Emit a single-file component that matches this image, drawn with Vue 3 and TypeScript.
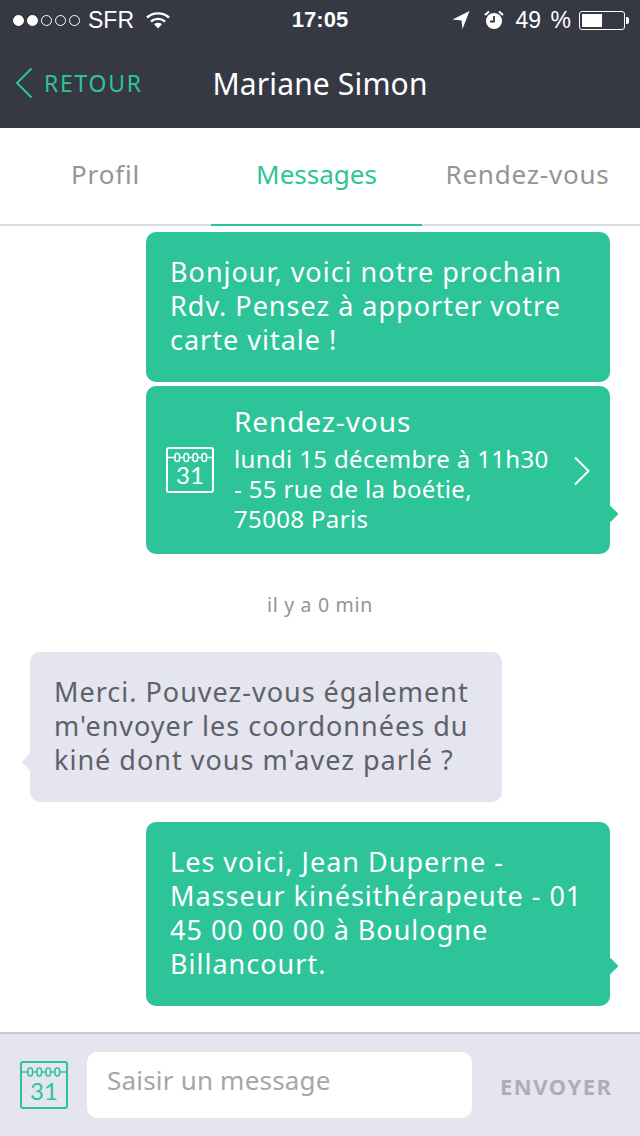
<template>
  <div class="screen">
    <header class="top">
      <div class="status">
        <div class="status-left">
          <span class="signal">
            <i v-for="n in 5" :key="n" class="dot" :class="{ on: n <= 2 }"></i>
          </span>
          <span class="carrier">SFR</span>
          <svg class="wifi" width="24" height="18" viewBox="0 0 24 18">
            <path d="M1 6.500C7 1 17 1 23 6.500" fill="none" stroke="#fff" stroke-width="2.400" />
            <path d="M5 10.500C9 7 15 7 19 10.500" fill="none" stroke="#fff" stroke-width="2.400" />
            <path d="M8 13C10.500 11.200 13.500 11.200 16 13L12 17.500Z" fill="#fff" />
          </svg>
        </div>
        <span class="time">17:05</span>
        <div class="status-right">
          <svg width="18" height="20" viewBox="0 0 18 20">
            <path d="M0.500 9.500L17.500 1L10.500 19L9.500 10.500Z" fill="#fff" />
          </svg>
          <svg class="alarm" width="20" height="20" viewBox="0 0 20 20">
            <circle cx="10" cy="11" r="8" fill="#fff" />
            <path d="M10 6V11.500H6" fill="none" stroke="#363844" stroke-width="1.800" />
            <path d="M1 5L5 1.500M19 5L15 1.500" stroke="#fff" stroke-width="2" />
          </svg>
          <span class="percent">49 %</span>
          <span class="battery"><span class="level"></span></span>
          <span class="nub"></span>
        </div>
      </div>
      <nav class="nav">
        <div class="back">
          <svg width="18" height="32" viewBox="0 0 18 32">
            <path d="M16.500 1.500L2 16L16.500 30.500" fill="none" stroke="#2dc499" stroke-width="2" />
          </svg>
          <span>RETOUR</span>
        </div>
        <h1 class="name">Mariane Simon</h1>
      </nav>
    </header>

    <div class="tabs">
      <div v-for="tab in tabs" :key="tab" class="tab" :class="{ active: tab === 'Messages' }">{{ tab }}</div>
    </div>

    <main class="thread">
      <div class="bubble mine first">Bonjour, voici notre prochain Rdv. Pensez à apporter votre carte vitale !</div>

      <div class="bubble mine rdv tail">
        <svg class="cal" width="48" height="46" viewBox="0 0 48 46">
          <path d="M1 10V3Q1 1 3 1H45Q47 1 47 3V10M1 10V43Q1 45 3 45H45Q47 45 47 43V10" fill="none" stroke="#fff" stroke-width="2" />
          <path d="M1 10.500H47" stroke="#fff" stroke-width="1.600" />
          <g fill="#2dc499" stroke="#fff" stroke-width="1.500">
            <rect x="9" y="6.500" width="4.500" height="8" rx="2.200" />
            <rect x="18" y="6.500" width="4.500" height="8" rx="2.200" />
            <rect x="27" y="6.500" width="4.500" height="8" rx="2.200" />
            <rect x="36" y="6.500" width="4.500" height="8" rx="2.200" />
          </g>
          <text x="24" y="37" text-anchor="middle" class="cal-num" fill="#fff">31</text>
        </svg>
        <div class="rdv-text">
          <div class="rdv-title">Rendez-vous</div>
          <div class="rdv-body">lundi 15 décembre à 11h30<br />- 55 rue de la boétie,<br />75008 Paris</div>
        </div>
        <svg class="chev" width="18" height="30" viewBox="0 0 18 30">
          <path d="M2 1.500L15.500 15L2 28.500" fill="none" stroke="#fff" stroke-width="2" />
        </svg>
      </div>

      <div class="stamp">il y a 0 min</div>

      <div class="bubble theirs">Merci. Pouvez-vous également m'envoyer les coordonnées du kiné dont vous m'avez parlé ?</div>

      <div class="bubble mine last tail">Les voici, Jean Duperne - Masseur kinésithérapeute - 01 45 00 00 00 à Boulogne Billancourt.</div>
    </main>

    <footer class="composer">
      <svg class="cal" width="48" height="48" viewBox="0 0 48 48">
        <path d="M1 11V3Q1 1 3 1H45Q47 1 47 3V11M1 11V45Q1 47 3 47H45Q47 47 47 45V11" fill="none" stroke="#2dc499" stroke-width="2" />
        <path d="M1 11H47" stroke="#2dc499" stroke-width="1.600" />
        <g fill="#e4e5ee" stroke="#2dc499" stroke-width="1.500">
          <rect x="8" y="7" width="4.500" height="8" rx="2.200" />
          <rect x="17" y="7" width="4.500" height="8" rx="2.200" />
          <rect x="26" y="7" width="4.500" height="8" rx="2.200" />
          <rect x="35" y="7" width="4.500" height="8" rx="2.200" />
        </g>
        <text x="24" y="39" text-anchor="middle" class="cal-num" fill="#2dc499">31</text>
      </svg>
      <div class="input">Saisir un message</div>
      <span class="send">ENVOYER</span>
    </footer>
  </div>
</template>

<script setup lang="ts">
const tabs: string[] = ['Profil', 'Messages', 'Rendez-vous']
</script>

<style>
body {
  background: #fff;
}
</style>

<style scoped>
.screen {
  width: 640px;
  height: 1136px;
  display: flex;
  flex-direction: column;
  overflow: hidden;
  font-family: "Noto Sans", Lato, sans-serif;
  background: #fff;
}

.top {
  height: 128px;
  background: #363844;
  color: #fff;
}

.status {
  height: 40px;
  display: grid;
  grid-template-columns: 1fr auto 1fr;
  align-items: center;
  font-family: "Liberation Sans", Arial, sans-serif;
  font-size: 23px;
}

.status-left {
  display: flex;
  align-items: center;
  padding-left: 13px;
}

.signal {
  display: flex;
  gap: 3px;
}

.dot {
  width: 11px;
  height: 11px;
  box-sizing: border-box;
  border: 1px solid #fff;
  border-radius: 50%;
}

.dot.on {
  background: #fff;
}

.carrier {
  margin-left: 8px;
}

.wifi {
  margin-left: 12px;
}

.time {
  font-weight: 700;
  font-size: 22px;
}

.status-right {
  display: flex;
  align-items: center;
  justify-content: flex-end;
  padding-right: 11px;
}

.alarm {
  margin-left: 14px;
}

.percent {
  margin-left: 12px;
  word-spacing: 3px;
}

.battery {
  width: 46px;
  height: 19px;
  margin-left: 8px;
  padding: 2px;
  box-sizing: border-box;
  border: 1px solid #fff;
  border-radius: 3px;
}

.level {
  display: block;
  width: 20px;
  height: 100%;
  background: #fff;
}

.nub {
  width: 3px;
  height: 7px;
  margin-left: 1px;
  background: #fff;
  border-radius: 0 2px 2px 0;
}

.nav {
  height: 88px;
  position: relative;
  display: flex;
  align-items: center;
  justify-content: center;
}

.back {
  position: absolute;
  left: 15px;
  top: 27px;
  display: flex;
  align-items: center;
  gap: 11px;
  color: #2dc499;
  font-size: 23px;
  letter-spacing: 1.700px;
}

.name {
  margin: 0 0 2px;
  font-size: 30px;
  font-weight: 400;
  letter-spacing: 0.150px;
  color: #fff;
}

.tabs {
  height: 98px;
  box-sizing: border-box;
  display: grid;
  grid-template-columns: 211px 211px 211px;
  border-bottom: 2px solid #dcdce8;
}

.tab {
  height: 98px;
  box-sizing: border-box;
  padding-bottom: 6px;
  display: flex;
  align-items: center;
  justify-content: center;
  font-size: 26px;
  letter-spacing: 0.800px;
  color: #949499;
}

.tab.active {
  padding-bottom: 4px;
  color: #2dc499;
  letter-spacing: 0;
  border-bottom: 2px solid #2dc499;
}

.thread {
  flex: 1;
  display: flex;
  flex-direction: column;
  align-items: flex-end;
  padding: 6px 30px 0;
}

.bubble {
  position: relative;
  box-sizing: border-box;
  border-radius: 10px;
  padding: 23px 24px;
  font-size: 27px;
  line-height: 34px;
  letter-spacing: 1px;
}

.mine {
  width: 464px;
  background: #2dc499;
  color: #fff;
}

.first {
  height: 150px;
}

.tail::after,
.theirs::after {
  content: "";
  position: absolute;
  width: 12px;
  height: 12px;
  transform: rotate(45deg);
}

.tail::after {
  right: -6px;
  bottom: 34px;
  background: #2dc499;
}

.rdv {
  height: 168px;
  margin-top: 4px;
  padding: 17px 0 0 20px;
  display: flex;
  align-items: flex-start;
}

.rdv .cal {
  margin-top: 44px;
  flex: none;
}

.rdv-text {
  width: 331px;
  margin-left: 20px;
}

.rdv-title {
  font-size: 28px;
  line-height: 36px;
  letter-spacing: 0.900px;
}

.rdv-body {
  margin-top: 5px;
  font-size: 24px;
  line-height: 30px;
  letter-spacing: 0.350px;
}

.chev {
  margin: 53px 0 0 8px;
}

.cal-num {
  font-family: Lato, sans-serif;
  font-size: 24px;
  font-weight: 400;
  letter-spacing: 0;
}

.stamp {
  align-self: center;
  margin-top: 39px;
  font-size: 19.500px;
  line-height: 24px;
  letter-spacing: 0.700px;
  color: #949499;
}

.theirs {
  align-self: flex-start;
  width: 472px;
  height: 150px;
  margin-top: 35px;
  background: #e4e5ee;
  color: #5f6169;
}

.theirs::after {
  left: -6px;
  bottom: 34px;
  background: #e4e5ee;
}

.last {
  height: 184px;
  margin-top: 20px;
}

.composer {
  height: 104px;
  box-sizing: border-box;
  border-top: 2px solid #c9c9dd;
  background: #e4e5ee;
  display: flex;
  align-items: center;
  padding-left: 20px;
}

.input {
  width: 385px;
  height: 66px;
  box-sizing: border-box;
  margin-left: 19px;
  padding: 11px 20px;
  border-radius: 10px;
  background: #fff;
  font-size: 26px;
  line-height: 34px;
  letter-spacing: 0.200px;
  color: #a6a6a8;
}

.send {
  margin: 2px 0 0 28px;
  font-size: 22px;
  font-weight: 700;
  letter-spacing: 1.500px;
  color: #adaeb7;
}
</style>
